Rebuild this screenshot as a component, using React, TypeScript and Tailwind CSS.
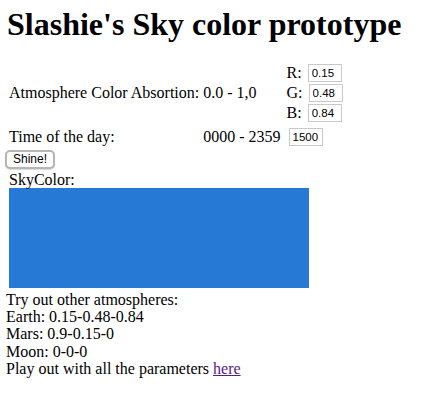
import React from 'react';

function SmallInput({ value }: { value: string }) {
  return (
    <input
      type="text"
      defaultValue={value}
      className="ml-[2px] w-[34px] h-[18px] border border-[#c8c8c8] bg-white px-[3px] font-['Liberation_Sans',sans-serif] text-[11.5px] text-black outline-none align-middle"
    />
  );
}

export default function App() {
  return (
    <div className="px-[6px] font-['Liberation_Serif',serif] text-[16px] leading-[17.25px] text-black bg-white min-h-[402px]">
      <h1 className="pt-[6px] pl-[1px] text-[32px] font-bold leading-[37px]">Slashie's Sky color prototype</h1>

      <table className="mt-[17px] border-separate border-spacing-[2px]">
        <tbody>
          <tr>
            <td className="p-[1px] align-middle">Atmosphere Color Absortion:</td>
            <td className="p-[1px] align-middle">0.0 - 1,0</td>
            <td className="py-[1px] pl-[3px] pr-[1px] align-middle">
              <div className="flex items-center h-[20px]">R:&nbsp;<SmallInput value="0.15" /></div>
              <div className="flex items-center h-[20px]">G:&nbsp;<SmallInput value="0.48" /></div>
              <div className="flex items-center h-[20px]">B:&nbsp;<SmallInput value="0.84" /></div>
            </td>
          </tr>
          <tr>
            <td className="p-[1px] align-middle">Time of the day:</td>
            <td className="p-[1px] align-middle">0000 - 2359</td>
            <td className="py-[1px] pl-[3px] pr-[1px] align-middle">
              <div className="flex items-center h-[19px]"><SmallInput value="1500" /></div>
            </td>
          </tr>
        </tbody>
      </table>

      <button className="-mt-[4px] -ml-[1px] h-[19px] w-[50px] rounded-[5px] border-2 border-[#b5b5b5] bg-white font-['Liberation_Sans',sans-serif] text-[12px] leading-none text-black shadow-[0_1px_1px_rgba(0,0,0,0.15)]">
        Shine!
      </button>

      <div className="mt-[2px] pl-[3px]">SkyColor:</div>
      <div className="ml-[3px] w-[300px] h-[100px] bg-[#267ad6]" />

      <div className="mt-[3px]">
        Try out other atmospheres:<br />
        Earth: 0.15-0.48-0.84<br />
        Mars: 0.9-0.15-0<br />
        Moon: 0-0-0<br />
        Play out with all the parameters <a href="#" className="text-[#551a8b] underline">here</a>
      </div>
    </div>
  );
}
